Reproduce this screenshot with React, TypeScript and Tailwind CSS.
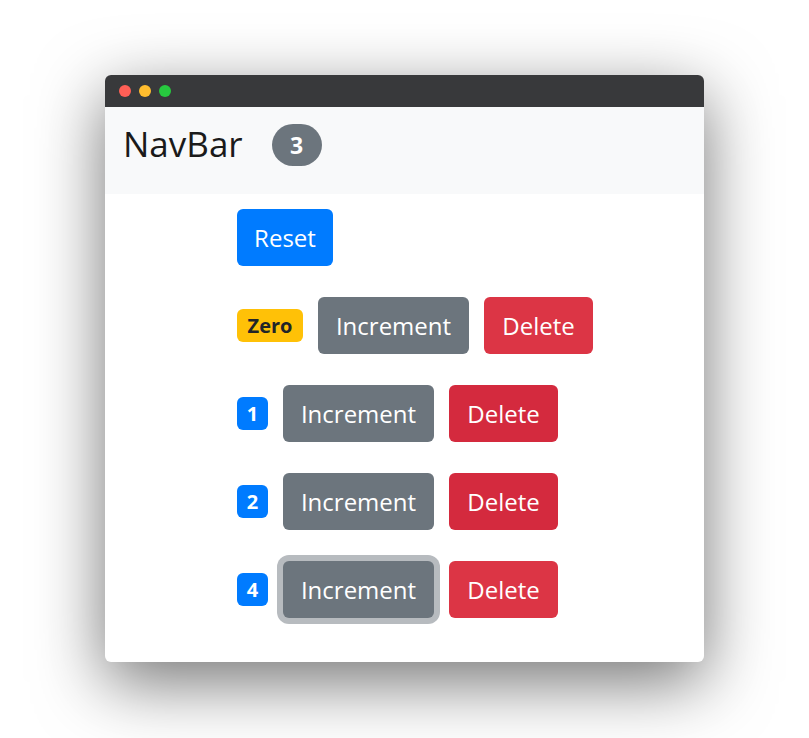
import React from "react";

type Row = { id: number; value: number; deleteColor: string; focused?: boolean };

const rows: Row[] = [
  { id: 1, value: 0, deleteColor: "bg-[#dc3545]" },
  { id: 2, value: 1, deleteColor: "bg-[#d42a3e]" },
  { id: 3, value: 2, deleteColor: "bg-[#d42a3e]" },
  { id: 4, value: 4, deleteColor: "bg-[#dc3545]", focused: true },
];

function Counter({ row }: { row: Row }) {
  const isZero = row.value === 0;
  return (
    <div className="flex items-center gap-[15px] h-[57px]">
      {isZero ? (
        <span className="flex items-center justify-center w-[66px] h-[33px] rounded-[6px] bg-[#ffc107] text-[#212529] text-[20px] font-bold">
          Zero
        </span>
      ) : (
        <span className="flex items-center justify-center w-[31px] h-[33px] rounded-[6px] bg-[#007bff] text-white text-[20px] font-bold">
          {row.value}
        </span>
      )}
      <button
        className={
          "w-[151px] h-[57px] rounded-[6px] bg-[#6c757d] text-white text-[24px] " +
          (row.focused ? "ring-[6px] ring-[#b7bbbf]" : "")
        }
      >
        Increment
      </button>
      <button className={`w-[109px] h-[57px] rounded-[6px] text-white text-[24px] ${row.deleteColor}`}>
        Delete
      </button>
    </div>
  );
}

export default function App() {
  return (
    <div
      className="w-full h-[738px] bg-white flex justify-center pt-[75px]"
      style={{ fontFamily: '"Open Sans", "Noto Sans", sans-serif' }}
    >
      <div className="w-[599px] h-[587px] rounded-[6px] overflow-hidden bg-white shadow-[0_20px_68px_rgba(0,0,0,0.55)]">
        {/* title bar */}
        <div className="h-[32px] bg-[#38393b] flex items-center gap-[8px] pl-[14px]">
          <span className="w-[12px] h-[12px] rounded-full bg-[#ff5f56]" />
          <span className="w-[12px] h-[12px] rounded-full bg-[#ffbd2e]" />
          <span className="w-[12px] h-[12px] rounded-full bg-[#27c93f]" />
        </div>

        {/* navbar */}
        <div className="h-[87px] bg-[#f8f9fa] flex items-start pl-[18px] pt-[16px] gap-[29px]">
          <span className="text-[35px] leading-[42px] text-[#1a1a1a]">NavBar</span>
          <span className="flex items-center justify-center w-[50px] h-[42px] mt-[1px] rounded-full bg-[#6c757d] text-white text-[23px] font-bold">
            3
          </span>
        </div>

        {/* content */}
        <div className="flex flex-col gap-[31px] pl-[132px] pt-[15px] pb-[44px]">
          <div>
            <button className="w-[96px] h-[57px] rounded-[6px] bg-[#007bff] text-white text-[24px]">
              Reset
            </button>
          </div>
          {rows.map((r) => (
            <Counter key={r.id} row={r} />
          ))}
        </div>
      </div>
    </div>
  );
}
